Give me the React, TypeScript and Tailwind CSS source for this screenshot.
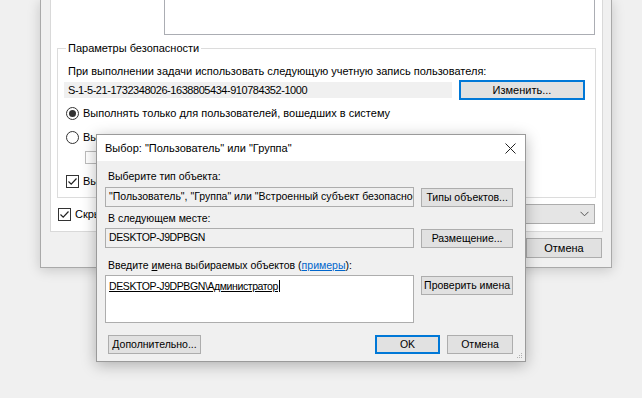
import clsx from "clsx";
import { ReactNode } from "react";

const Btn = ({ children, def, className }: { children: ReactNode; def?: boolean; className?: string }) => (
  <div
    className={clsx(
      "flex items-center justify-center whitespace-nowrap border bg-[#e1e1e1] leading-none",
      def ? "border-[#0078d7] shadow-[inset_0_0_0_1px_#0078d7]" : "border-[#adadad]",
      className
    )}
  >
    {children}
  </div>
);

const Radio = ({ on }: { on?: boolean }) => (
  <div className="flex h-[13px] w-[13px] shrink-0 items-center justify-center rounded-full border border-[#333]">
    {on && <div className="h-[7px] w-[7px] rounded-full bg-[#333]" />}
  </div>
);

const Check = ({ on, disabled }: { on?: boolean; disabled?: boolean }) => (
  <div
    className={clsx(
      "flex h-[13px] w-[13px] shrink-0 items-center justify-center border",
      disabled ? "border-[#bcbcbc] bg-[#fff]" : "border-[#333] bg-white"
    )}
  >
    {on && (
      <svg width="11" height="11" viewBox="0 0 11 11">
        <path d="M1.5 5.5 L4.2 8.2 L9.5 2.5" fill="none" stroke="#222" strokeWidth="1.2" />
      </svg>
    )}
  </div>
);

const BackWindow = () => (
  <div className="absolute left-[40px] top-0 flex h-[268px] w-[572px] flex-col border-x border-b border-[#a9a9a9] bg-[#f0f0f0] shadow-[0_2px_12px_rgba(0,0,0,0.18)]">
    {/* tab page */}
    <div className="ml-[9px] flex h-[232px] w-[553px] flex-col border-x border-b border-[#d9d9d9] bg-white">
      <div className="ml-[113px] h-[35px] w-[431px] border-x border-b border-[#abadb3] bg-white" />

      <fieldset className="ml-[6px] mt-[6px] w-[539px] border border-[#dcdcdc] px-[6px] pb-[9px]">
        <legend className="ml-[2px] px-[2px] leading-[14px]">Параметры безопасности</legend>
        <div className="mt-[9px] pl-[4px] leading-[14px]">
          При выполнении задачи использовать следующую учетную запись пользователя:
        </div>
        <div className="mt-[2px] flex h-[20px] items-center">
          <div className="flex h-[16px] w-[388px] items-center bg-[#f0f0f0] pl-[4px] tracking-[-0.45px]">
            S-1-5-21-1732348026-1638805434-910784352-1000
          </div>
          <Btn def className="ml-[7px] h-[20px] w-[126px]">
            Изменить...
          </Btn>
        </div>
        <div className="mt-[6px] flex h-[14px] items-center gap-[4px] pl-[2px]">
          <Radio on />
          <span>Выполнять только для пользователей, вошедших в систему</span>
        </div>
        <div className="mt-[10px] flex h-[14px] items-center gap-[4px] pl-[2px]">
          <Radio />
          <span>Выполнять вне зависимости от регистрации пользователя</span>
        </div>
        <div className="mt-[6px] flex h-[14px] items-center gap-[4px] pl-[21px] text-[#9a9a9a]">
          <Check disabled />
          <span>Не сохранять пароль. Будут доступны ресурсы только локального компьютера.</span>
        </div>
        <div className="mt-[10px] flex h-[14px] items-center gap-[4px] pl-[2px]">
          <Check on />
          <span>Выполнить с наивысшими правами</span>
        </div>
      </fieldset>

      <div className="mt-[6px] flex h-[20px] items-center pl-[7px] pr-[7px]">
        <Check on />
        <span className="ml-[4px]">Скрытая задача</span>
        <span className="ml-auto mr-[8px]">Настроить для:</span>
        <div className="flex h-[20px] w-[210px] items-center justify-between border border-[#adadad] bg-[#e5e5e5] pl-[4px] pr-[5px]">
          <span>Windows 10</span>
          <svg width="9" height="6" viewBox="0 0 9 6">
            <path d="M0.5 0.8 L4.5 4.8 L8.5 0.8" fill="none" stroke="#555" strokeWidth="1" />
          </svg>
        </div>
      </div>
    </div>

    <div className="mt-[6px] flex justify-end gap-[6px] pr-[9px]">
      <Btn className="h-[20px] w-[75px]">ОК</Btn>
      <Btn className="h-[20px] w-[76px]">Отмена</Btn>
    </div>
  </div>
);

const Dialog = () => (
  <div className="absolute left-[96px] top-[134px] flex w-[430px] flex-col border border-[#9a9a9a] bg-[#f0f0f0] text-[10.5px] shadow-[0_3px_14px_rgba(0,0,0,0.28)]">
    <div className="flex h-[26px] items-center justify-between bg-white pl-[8px] pr-[9px]">
      <span className="text-[11px]">Выбор: "Пользователь" или "Группа"</span>
      <svg width="11" height="11" viewBox="0 0 11 11">
        <path d="M0.5 0.5 L10.5 10.5 M10.5 0.5 L0.5 10.5" stroke="#222" strokeWidth="1" />
      </svg>
    </div>

    <div className="flex flex-col pb-[7px] pl-[8px] pr-[12px] pt-[9px]">
      <div className="pl-[3px] leading-[13px]">Выберите тип объекта:</div>
      <div className="mt-[4px] flex items-center gap-[7px]">
        <div className="flex h-[20px] w-[310px] items-center overflow-hidden whitespace-nowrap border border-[#adadad] bg-[#f0f0f0] pl-[3px]">
          "Пользователь", "Группа" или "Встроенный субъект безопасности"
        </div>
        <Btn className="h-[19px] w-[92px]">Типы объектов...</Btn>
      </div>

      <div className="mt-[5px] pl-[3px] leading-[13px]">В следующем месте:</div>
      <div className="mt-[3px] flex items-center gap-[7px]">
        <div className="flex h-[20px] w-[310px] items-center border border-[#adadad] bg-[#f0f0f0] pl-[3px] tracking-[-0.4px]">
          DESKTOP-J9DPBGN
        </div>
        <Btn className="h-[19px] w-[92px]">Размещение...</Btn>
      </div>

      <div className="mt-[11px] pl-[3px] leading-[13px]">
        Введите <span className="underline">и</span>мена выбираемых объектов (
        <span className="text-[#0066cc] underline">примеры</span>):
      </div>
      <div className="mt-[3px] flex items-start gap-[7px]">
        <div className="h-[48px] w-[310px] border border-[#adadad] bg-white pl-[3px] pt-[2px]">
          <span className="tracking-[-0.4px] underline">DESKTOP-J9DPBGN\Администратор</span>
          <span className="ml-[1px] inline-block h-[12px] w-[1px] translate-y-[2px] bg-black" />
        </div>
        <Btn className="mt-[1px] h-[19px] w-[92px]">Проверить имена</Btn>
      </div>

      <div className="mt-[12px] flex items-center">
        <Btn className="ml-[3px] h-[19px] w-[93px]">Дополнительно...</Btn>
        <Btn def className="ml-auto h-[19px] w-[65px]">
          OK
        </Btn>
        <Btn className="ml-[7px] h-[19px] w-[66px]">Отмена</Btn>
      </div>
    </div>

    <svg className="absolute bottom-[2px] right-[2px]" width="7" height="7" viewBox="0 0 7 7">
      <g fill="#b0b0b0">
        <rect x="5" y="1" width="1" height="1" />
        <rect x="3" y="3" width="1" height="1" />
        <rect x="5" y="3" width="1" height="1" />
        <rect x="1" y="5" width="1" height="1" />
        <rect x="3" y="5" width="1" height="1" />
        <rect x="5" y="5" width="1" height="1" />
      </g>
    </svg>
  </div>
);

export default function App() {
  return (
    <div className="relative h-[398px] w-[642px] overflow-hidden bg-[#f0f0f0] font-['Liberation_Sans',Arial,sans-serif] text-[11px] text-black">
      <BackWindow />
      <Dialog />
    </div>
  );
}
